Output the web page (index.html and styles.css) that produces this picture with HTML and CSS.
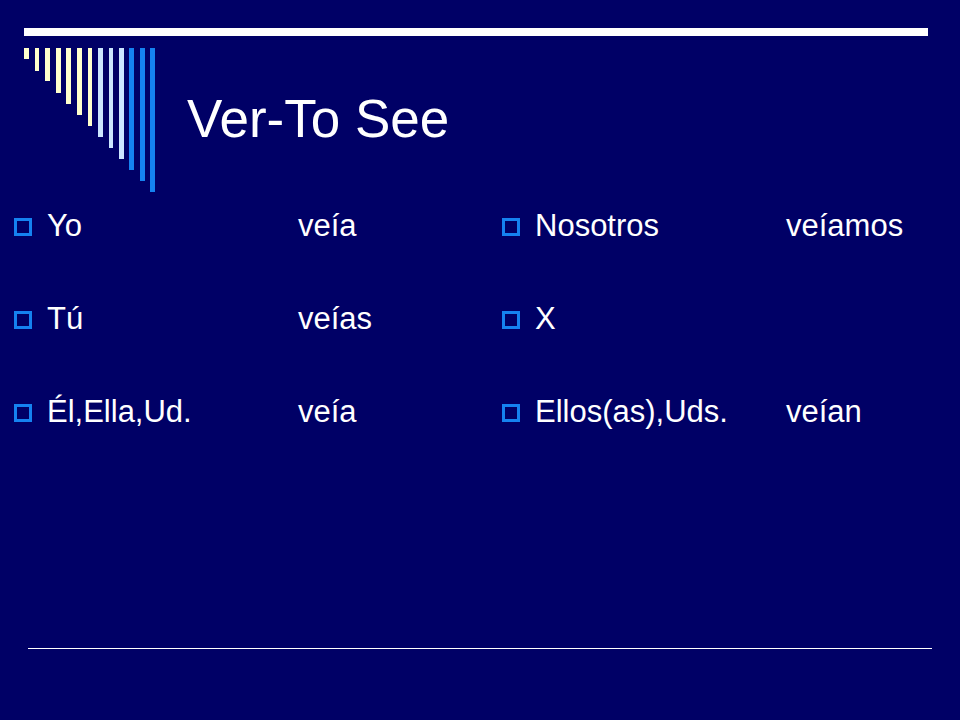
FILE: index.html
```html
<!DOCTYPE html>
<html lang="es">
<head>
<meta charset="utf-8">
<title>Ver-To See</title>
<link rel="stylesheet" href="styles.css">
</head>
<body>
<div class="slide">
  <div class="topbar"></div>
  <header class="head">
    <svg class="bars" width="132" height="145" viewBox="0 0 132 145" aria-hidden="true">
      <rect x="0" y="0" width="5" height="11" fill="#FFFFCC"/>
      <rect x="11" y="0" width="4" height="23" fill="#FFFFCC"/>
      <rect x="21" y="0" width="5" height="33" fill="#FFFFCC"/>
      <rect x="32" y="0" width="5" height="45" fill="#FFFFCC"/>
      <rect x="42" y="0" width="5" height="56" fill="#FFFFCC"/>
      <rect x="53" y="0" width="5" height="67" fill="#FFFFCC"/>
      <rect x="64" y="0" width="4" height="78" fill="#FFFFCC"/>
      <rect x="74" y="0" width="5" height="89" fill="#CCE6FF"/>
      <rect x="85" y="0" width="4" height="100" fill="#CCE6FF"/>
      <rect x="95" y="0" width="5" height="111" fill="#CCE6FF"/>
      <rect x="105" y="0" width="5" height="122" fill="#1582F0"/>
      <rect x="116" y="0" width="5" height="133" fill="#1582F0"/>
      <rect x="126" y="0" width="5" height="144" fill="#1582F0"/>
    </svg>
    <h1 class="title">Ver-To See</h1>
  </header>
  <main class="cols">
    <ul class="col col-left">
      <li class="item"><span class="bullet"></span><span class="label">Yo</span><span class="value">veía</span></li>
      <li class="item"><span class="bullet"></span><span class="label">Tú</span><span class="value">veías</span></li>
      <li class="item"><span class="bullet"></span><span class="label">Él,Ella,Ud.</span><span class="value">veía</span></li>
    </ul>
    <ul class="col col-right">
      <li class="item"><span class="bullet"></span><span class="label">Nosotros</span><span class="value">veíamos</span></li>
      <li class="item"><span class="bullet"></span><span class="label">X</span><span class="value"></span></li>
      <li class="item"><span class="bullet"></span><span class="label">Ellos(as),Uds.</span><span class="value">veían</span></li>
    </ul>
  </main>
  <div class="footline"></div>
</div>
</body>
</html>
```

FILE: styles.css
```css
html, body {
  margin: 0;
  padding: 0;
  background: #000066;
}

.slide {
  width: 960px;
  height: 720px;
  display: flex;
  flex-direction: column;
  background: #000066;
  color: #ffffff;
  font-family: "Liberation Sans", Arial, sans-serif;
  overflow: hidden;
}

.topbar {
  margin: 28px 0 0 24px;
  width: 904px;
  height: 8px;
  background: #ffffff;
}

.head {
  display: flex;
  align-items: flex-start;
  margin: 12px 0 0 24px;
  height: 145px;
}

.bars {
  display: block;
  flex: none;
}

.title {
  margin: 44px 0 0 31px;
  font-size: 53px;
  line-height: 53px;
  font-weight: normal;
}

.cols {
  display: flex;
  margin-top: 13px;
  padding-left: 14px;
}

.col {
  list-style: none;
  margin: 0;
  padding: 0;
  display: flex;
  flex-direction: column;
  gap: 53px;
}

.col-left {
  flex: none;
  width: 488px;
}

.col-right {
  flex: 1;
  min-width: 0;
}

.item {
  display: flex;
  align-items: center;
  height: 40px;
  font-size: 31px;
  line-height: 40px;
  white-space: nowrap;
}

.bullet {
  flex: none;
  box-sizing: border-box;
  width: 18px;
  height: 18px;
  border: 3px solid #1582F0;
  margin: 2px 15px 0 0;
}

.label {
  width: 251px;
  flex: none;
}

.footline {
  margin: auto 0 71px 28px;
  width: 904px;
  height: 1px;
  background: #ffffff;
}
```
